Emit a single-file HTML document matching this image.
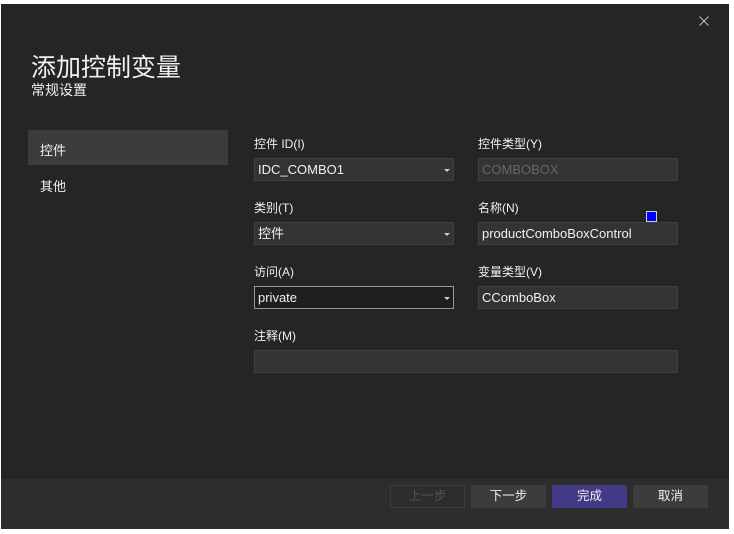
<!DOCTYPE html><html><head><style>
body{margin:0;width:734px;height:534px;background:#fff;position:relative;overflow:hidden;font-family:"Liberation Sans","Noto Sans CJK SC",sans-serif;}
.dlg{position:absolute;left:1px;top:4px;width:728px;height:525px;background:#252525;}
.foot{position:absolute;left:0;top:475px;width:728px;height:50px;background:#2d2d2d;}
.a{position:absolute;color:#f0f0f0;font-size:12px;}
.f{position:absolute;height:21px;background:#333;border:1px solid #3f3f3f;color:#f0f0f0;font-size:13px;line-height:21px;padding-left:3px;box-sizing:content-box;}
.arr{position:absolute;right:3px;top:10px;width:0;height:0;border-left:3px solid transparent;border-right:3px solid transparent;border-top:3px solid #ccc;}
.b{position:absolute;top:481px;height:23px;width:75px;text-align:center;line-height:23px;font-size:12.5px;color:#f0f0f0;background:#3c3c3c;}
</style></head><body>
<div class="dlg">
<svg style="position:absolute;left:698px;top:12px" width="10" height="10"><path d="M0.5 0.5L9.5 9.5M9.5 0.5L0.5 9.5" stroke="#bbb" stroke-width="1"/></svg>
<div class="a" style="left:30px;top:44px;font-size:25px">添加控制变量</div>
<div class="a" style="left:30px;top:76px;font-size:14px">常规设置</div>
<div style="position:absolute;left:27px;top:126px;width:200px;height:35px;background:#3c3c3c"></div>
<div class="a" style="left:39px;top:136px;font-size:13px">控件</div>
<div class="a" style="left:39px;top:172px;font-size:13px">其他</div>
<div class="a" style="left:253px;top:131px">控件 ID(I)</div>
<div class="f" style="left:253px;top:154px;width:195px">IDC_COMBO1<div class="arr"></div></div>
<div class="a" style="left:477px;top:131px">控件类型(Y)</div>
<div class="f" style="left:477px;top:154px;width:195px;color:#666">COMBOBOX</div>
<div class="a" style="left:253px;top:195px">类别(T)</div>
<div class="f" style="left:253px;top:218px;width:195px">控件<div class="arr"></div></div>
<div class="a" style="left:477px;top:195px">名称(N)</div>
<div style="position:absolute;left:645px;top:207px;width:9px;height:9px;background:#00f;border:1px solid #ccc"></div>
<div class="f" style="left:477px;top:218px;width:195px">productComboBoxControl</div>
<div class="a" style="left:253px;top:259px">访问(A)</div>
<div class="f" style="left:253px;top:282px;width:195px;background:#1e1e1e;border-color:#999">private<div class="arr"></div></div>
<div class="a" style="left:477px;top:259px">变量类型(V)</div>
<div class="f" style="left:477px;top:282px;width:195px">CComboBox</div>
<div class="a" style="left:253px;top:323px">注释(M)</div>
<div class="f" style="left:253px;top:346px;width:419px"></div>
<div class="foot"></div>
<div class="b" style="left:389px;background:#2d2d2d;border:1px solid #3c3c3c;width:73px;height:21px;line-height:21px;color:#555">上一步</div>
<div class="b" style="left:470px">下一步</div>
<div class="b" style="left:551px;background:#433a87">完成</div>
<div class="b" style="left:632px">取消</div>
</div>
</body></html>
